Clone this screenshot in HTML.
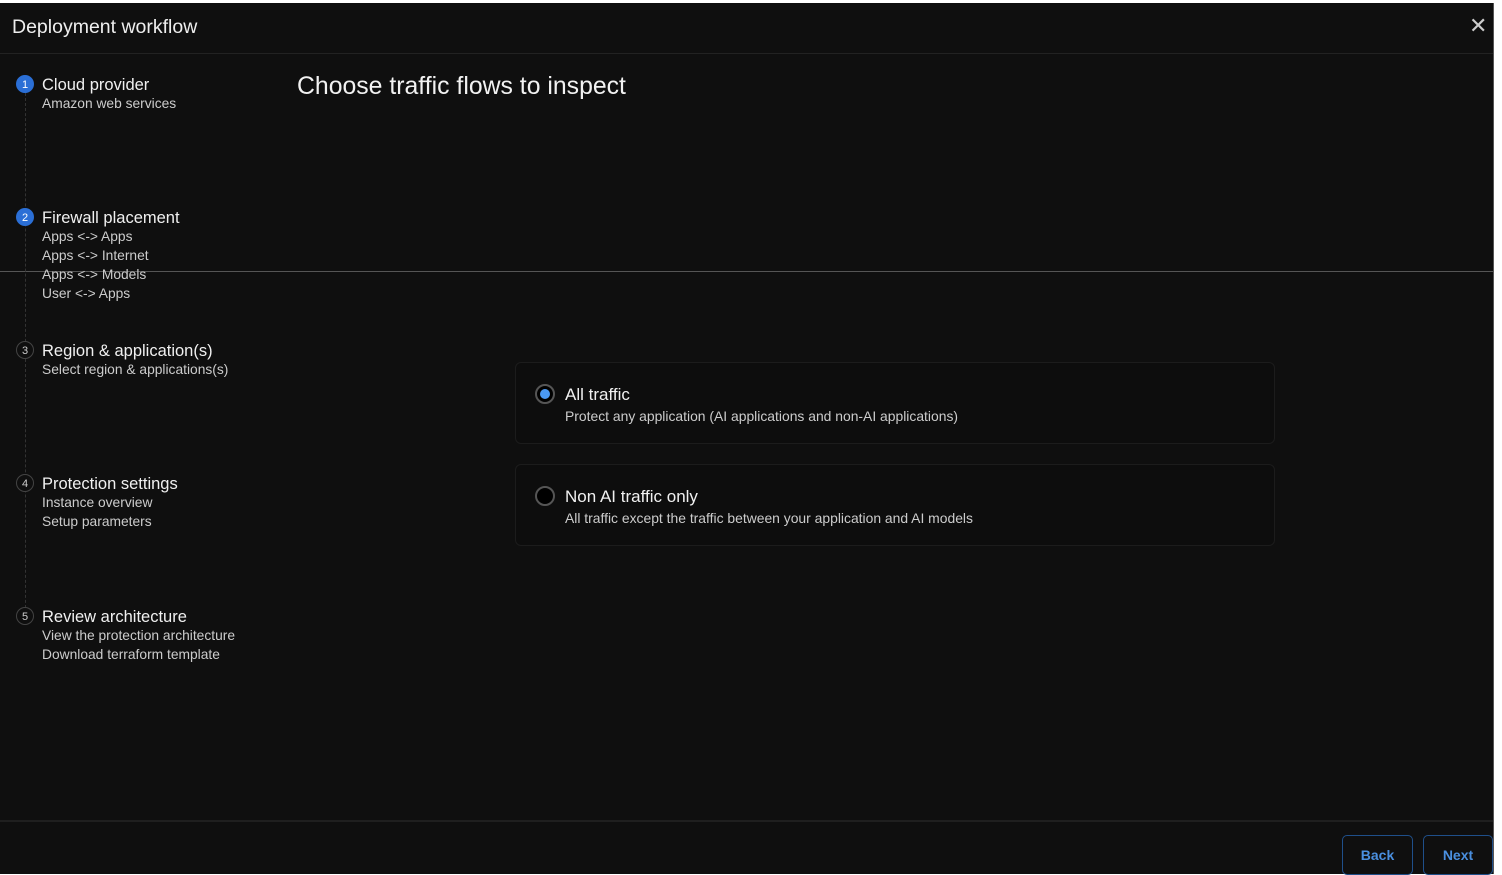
<!DOCTYPE html>
<html><head><meta charset="utf-8"><style>
*{margin:0;padding:0;box-sizing:border-box}
html,body{width:1502px;height:874px;background:#fff;overflow:hidden;font-family:"Liberation Sans",sans-serif}
#app{position:absolute;left:0;top:3px;width:1494px;height:871px;background:#0f0f0f;border-right:1px solid #555;color:#e6e6e6}
.hdr{position:absolute;left:0;top:0;width:100%;height:51px;border-bottom:1px solid #222}
.hdr .t{position:absolute;left:12px;top:13px;font-size:19.5px;color:#eee}
.x{position:absolute;left:1469px;top:13px;font-size:22px;color:#ccc;line-height:20px}
.hl{position:absolute;left:0;top:268px;width:1494px;height:1px;background:#555}
.vl{position:absolute;left:25px;top:90px;height:530px;border-left:1px dashed #333}
.step{position:absolute;left:16px}
.num{position:absolute;left:0;top:0;width:18px;height:18px;border-radius:50%;font-size:11px;line-height:18px;text-align:center;color:#ccc;border:1px solid #444;background:#0f0f0f}
.num.a{background:#2b6fd6;border-color:#2b6fd6;color:#fff}
.st{position:absolute;left:26px;top:0;white-space:nowrap}
.st b{display:block;font-weight:normal;font-size:16.5px;color:#f0f0f0;line-height:20px}
.st span{display:block;font-size:13.8px;color:#ccc;line-height:19px;margin-top:-1px;margin-bottom:1px}
h1{position:absolute;left:297px;top:70px;font-size:24.8px;font-weight:normal;color:#f2f2f2}
.card{position:absolute;left:515px;width:760px;height:82px;border:1px solid #1c1c1c;border-radius:6px;background:#0d0d0d}
.rad{position:absolute;left:19px;top:21px;width:20px;height:20px;border-radius:50%;border:2px solid #555;background:#000}
.rad.on::after{content:"";position:absolute;left:3px;top:3px;width:10px;height:10px;border-radius:50%;background:#4a9af5}
.ct{position:absolute;left:49px;top:22px;font-size:17px;color:#f0f0f0}
.cd{position:absolute;left:49px;top:45px;font-size:13.9px;color:#ccc}
.ftr{position:absolute;left:0;top:817px;width:100%;height:2px;background:#1f1f1f}
.btn{position:absolute;top:832px;height:40px;border:1px solid #1f4f8a;border-radius:5px;color:#4a8fdf;font-size:14px;text-align:center;line-height:38px;font-weight:bold}
</style></head><body><div id="app">
<div class="hdr"><div class="t">Deployment workflow</div><div class="x">✕</div></div>
<div class="hl"></div>
<div class="vl"></div>
<div class="step" style="top:72px"><div class="num a">1</div><div class="st"><b>Cloud provider</b><span>Amazon web services</span></div></div>
<div class="step" style="top:205px"><div class="num a">2</div><div class="st"><b>Firewall placement</b><span>Apps &lt;-&gt; Apps</span><span>Apps &lt;-&gt; Internet</span><span>Apps &lt;-&gt; Models</span><span>User &lt;-&gt; Apps</span></div></div>
<div class="step" style="top:338px"><div class="num">3</div><div class="st"><b>Region &amp; application(s)</b><span>Select region &amp; applications(s)</span></div></div>
<div class="step" style="top:471px"><div class="num">4</div><div class="st"><b>Protection settings</b><span>Instance overview</span><span>Setup parameters</span></div></div>
<div class="step" style="top:604px"><div class="num">5</div><div class="st"><b>Review architecture</b><span>View the protection architecture</span><span>Download terraform template</span></div></div>
<h1>Choose traffic flows to inspect</h1>
<div class="card" style="top:359px"><div class="rad on"></div><div class="ct">All traffic</div><div class="cd">Protect any application (AI applications and non-AI applications)</div></div>
<div class="card" style="top:461px"><div class="rad"></div><div class="ct">Non AI traffic only</div><div class="cd">All traffic except the traffic between your application and AI models</div></div>
<div class="ftr"></div>
<div class="btn" style="left:1342px;width:71px">Back</div>
<div class="btn" style="left:1423px;width:70px">Next</div>
</div></body></html>
